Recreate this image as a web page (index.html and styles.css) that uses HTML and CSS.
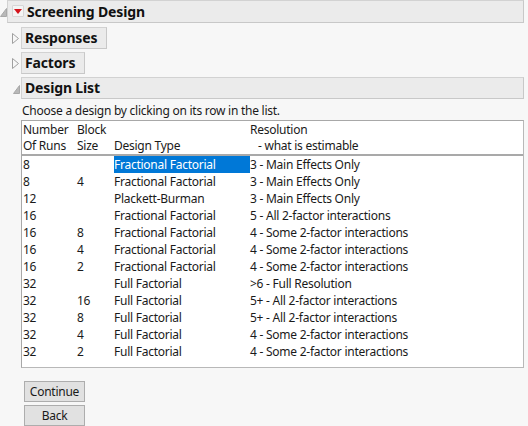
FILE: index.html
```html
<!DOCTYPE html>
<html>
<head>
<meta charset="utf-8">
<link rel="stylesheet" href="styles.css">
</head>
<body>
<div class="outline">
  <div class="node top">
    <svg class="tri open" width="7" height="9" viewBox="0 0 7 9"><path d="M6.5 0.5 L6.5 8.5 L0.5 8.5 Z" fill="#b8b8b8" stroke="#a8a8a8" stroke-width="1"/></svg>
    <div class="hdr wide">
      <span class="redbtn"><svg width="8" height="5" viewBox="0 0 8 5"><path d="M0 0 L8 0 L4 5 Z" fill="#d4141c"/></svg></span>
      <span class="title">Screening Design</span>
    </div>
  </div>
  <div class="children">
    <div class="node">
      <svg class="tri closed" width="7" height="11" viewBox="0 0 7 11"><path d="M0.5 0.5 L6.5 5.5 L0.5 10.5 Z" fill="none" stroke="#a0a0a0" stroke-width="1"/></svg>
      <div class="hdr"><span class="title">Responses</span></div>
    </div>
    <div class="node">
      <svg class="tri closed" width="7" height="11" viewBox="0 0 7 11"><path d="M0.5 0.5 L6.5 5.5 L0.5 10.5 Z" fill="none" stroke="#a0a0a0" stroke-width="1"/></svg>
      <div class="hdr"><span class="title">Factors</span></div>
    </div>
    <div class="node">
      <svg class="tri open" width="7" height="9" viewBox="0 0 7 9"><path d="M6.5 0.5 L6.5 8.5 L0.5 8.5 Z" fill="#b8b8b8" stroke="#a8a8a8" stroke-width="1"/></svg>
      <div class="hdr wide"><span class="title">Design List</span></div>
    </div>
    <div class="content">
      <p class="hint">Choose a design by clicking on its row in the list.</p>
      <div class="list">
        <div class="grid head">
          <span>Number</span><span>Block</span><span></span><span>Resolution</span>
          <span>Of Runs</span><span>Size</span><span>Design Type</span><span class="indent">- what is estimable</span>
        </div>
        <div class="sep"></div>
        <div class="grid body">
          <span>8</span><span></span><span class="sel">Fractional Factorial</span><span>3 - Main Effects Only</span>
          <span>8</span><span>4</span><span>Fractional Factorial</span><span>3 - Main Effects Only</span>
          <span>12</span><span></span><span>Plackett-Burman</span><span>3 - Main Effects Only</span>
          <span>16</span><span></span><span>Fractional Factorial</span><span>5 - All 2-factor interactions</span>
          <span>16</span><span>8</span><span>Fractional Factorial</span><span>4 - Some 2-factor interactions</span>
          <span>16</span><span>4</span><span>Fractional Factorial</span><span>4 - Some 2-factor interactions</span>
          <span>16</span><span>2</span><span>Fractional Factorial</span><span>4 - Some 2-factor interactions</span>
          <span>32</span><span></span><span>Full Factorial</span><span>&gt;6 - Full Resolution</span>
          <span>32</span><span>16</span><span>Full Factorial</span><span>5+ - All 2-factor interactions</span>
          <span>32</span><span>8</span><span>Full Factorial</span><span>5+ - All 2-factor interactions</span>
          <span>32</span><span>4</span><span>Full Factorial</span><span>4 - Some 2-factor interactions</span>
          <span>32</span><span>2</span><span>Full Factorial</span><span>4 - Some 2-factor interactions</span>
        </div>
      </div>
      <div class="buttons">
        <button class="btn">Continue</button>
        <button class="btn">Back</button>
      </div>
    </div>
  </div>
</div>
</body>
</html>
```
FILE: styles.css
```css
html, body {
  margin: 0;
  padding: 0;
  background: #f7f7f7;
  width: 528px;
  height: 426px;
  overflow: hidden;
}
body {
  font-family: "Noto Sans", "Open Sans", sans-serif;
  color: #1a1a1a;
}
.outline {
  padding-top: 0;
}
.node {
  display: flex;
  align-items: center;
  margin-bottom: 3px;
}
.node.top {
  margin-bottom: 4px;
}
.tri {
  flex: none;
}
.top .tri {
  margin-top: 2px;
}
.children {
  padding-left: 12px;
}
.children .tri {
  margin-right: 2px;
}
.children .tri.open {
  margin-left: 1px;
  margin-right: 1px;
  margin-top: 3px;
}
.hdr {
  box-sizing: border-box;
  height: 22px;
  background: #ebebeb;
  border: 1px solid #d2d2d2;
  border-right-color: #c8c8c8;
  border-bottom-color: #c8c8c8;
  display: flex;
  align-items: center;
  padding: 0 9px 1px 3px;
}
.top .hdr {
  height: 23px;
}
.hdr.wide {
  flex: 1;
  margin-right: 4px;
}
.title {
  font-weight: bold;
  font-size: 14px;
  letter-spacing: -0.15px;
  color: #111;
}
.redbtn {
  box-sizing: border-box;
  width: 12px;
  height: 12px;
  border: 1px solid #d6d6d6;
  background: #f4f4f4;
  border-radius: 1px;
  display: flex;
  align-items: center;
  justify-content: center;
  margin: 0 3px 0 1px;
}
.content {
  padding-left: 9px;
  margin-right: 4px;
}
.hint {
  margin: 4px 0 1px 1px;
  font-size: 12px;
  line-height: 16px;
  letter-spacing: -0.25px;
}
.list {
  background: #fff;
  border: 1px solid #a8a8a8;
  border-right-color: #b8b8b8;
  border-bottom-color: #b8b8b8;
  height: 246px;
  padding-left: 1px;
  font-size: 12px;
  letter-spacing: -0.25px;
}
.grid {
  display: grid;
  grid-template-columns: 54px 37px 136px 1fr;
}
.grid span {
  white-space: nowrap;
  line-height: 17px;
  height: 17px;
}
.head span {
  line-height: 16px;
  height: 16px;
}
.head {
  padding-top: 1px;
}
.indent {
  padding-left: 8px;
}
.sep {
  height: 2px;
  background: #a9a9a9;
  margin-left: -1px;
}
.sel {
  background: #0078d7;
  color: #fff;
}
.buttons {
  display: flex;
  flex-direction: column;
  align-items: flex-start;
  gap: 3px;
  margin-top: 13px;
  padding-left: 3px;
}
.btn {
  box-sizing: border-box;
  width: 61px;
  height: 21px;
  background: #e1e1e1;
  border: 1px solid #adadad;
  border-radius: 0;
  font-family: "Noto Sans", "Open Sans", sans-serif;
  font-size: 12px;
  letter-spacing: -0.25px;
  color: #1a1a1a;
  padding: 0;
  line-height: 19px;
}
```
